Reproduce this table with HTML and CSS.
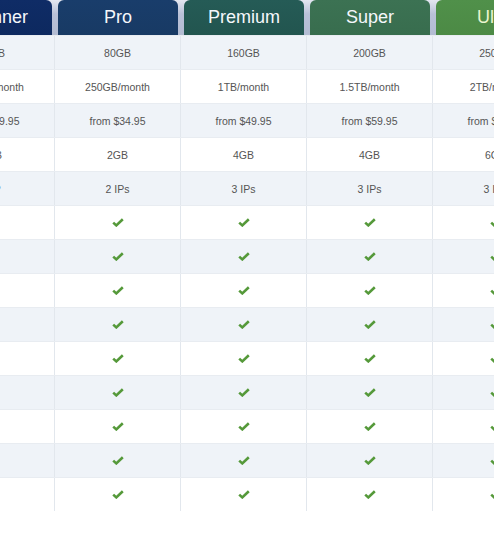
FILE: index.html
```html
<!DOCTYPE html>
<html>
<head>
<meta charset="utf-8">
<link rel="stylesheet" href="styles.css">
</head>
<body>
<div class="viewport">
  <div class="table">
    <div class="head">
      <div class="hcell beginner">Beginner</div>
      <div class="hcell pro">Pro</div>
      <div class="hcell premium">Premium</div>
      <div class="hcell super">Super</div>
      <div class="hcell ultra">Ultra</div>
    </div>
    <div class="row alt"><div class="cell">40GB</div><div class="cell">80GB</div><div class="cell">160GB</div><div class="cell">200GB</div><div class="cell">250GB</div></div>
    <div class="row"><div class="cell">100GB/month</div><div class="cell">250GB/month</div><div class="cell">1TB/month</div><div class="cell">1.5TB/month</div><div class="cell">2TB/month</div></div>
    <div class="row alt"><div class="cell">from $19.95</div><div class="cell">from $34.95</div><div class="cell">from $49.95</div><div class="cell">from $59.95</div><div class="cell">from $69.95</div></div>
    <div class="row"><div class="cell">1GB</div><div class="cell">2GB</div><div class="cell">4GB</div><div class="cell">4GB</div><div class="cell">6GB</div></div>
    <div class="row alt"><div class="cell">1 IP</div><div class="cell">2 IPs</div><div class="cell">3 IPs</div><div class="cell">3 IPs</div><div class="cell">3 IPs</div></div>
    <div class="row check-row"></div>
    <div class="row check-row alt"></div>
    <div class="row check-row"></div>
    <div class="row check-row alt"></div>
    <div class="row check-row"></div>
    <div class="row check-row alt"></div>
    <div class="row check-row"></div>
    <div class="row check-row alt"></div>
    <div class="row check-row"></div>
  </div>
</div>
<script>
  var svg = '<svg class="check" width="12" height="9" viewBox="0 0 12 9"><path d="M1.2 4.6 L4.3 7.4 L10.8 1.2" fill="none" stroke="#55993a" stroke-width="2.6" stroke-linejoin="miter"/></svg>';
  document.querySelectorAll('.check-row').forEach(function (r) {
    var h = '';
    for (var i = 0; i < 5; i++) h += '<div class="cell">' + svg + '</div>';
    r.innerHTML = h;
  });
</script>
</body>
</html>
```
FILE: styles.css
```css
html, body {
  margin: 0;
  padding: 0;
  background: #ffffff;
  overflow: hidden;
}
.viewport {
  width: 494px;
  height: 559px;
  overflow: hidden;
}
.table {
  width: 630px;
  margin-left: -72px;
  font-family: "Liberation Sans", Arial, sans-serif;
}
.head {
  display: grid;
  grid-template-columns: repeat(5, 126px);
  height: 35px;
  background: linear-gradient(#e4e7f1, #b9c1d8 40%, #b3bcd2);
}
.hcell {
  margin: 0 2px 0 4px;
  border-radius: 6px 6px 0 0;
  color: #f4f7fb;
  font-size: 18px;
  display: flex;
  align-items: center;
  justify-content: center;
}
.beginner { background: linear-gradient(#0f2c66, #0d295f); }
.pro { background: linear-gradient(#193d6b, #183a64); }
.premium { background: linear-gradient(#255b56, #22554f); }
.super { background: linear-gradient(#3c7253, #386d4e); }
.ultra { background: linear-gradient(#50904a, #4c8a45); color: #eaf6cf; }
.row {
  display: grid;
  grid-template-columns: repeat(5, 126px);
  height: 34px;
  box-sizing: border-box;
  border-top: 1px solid #e8ecf1;
  background: #ffffff;
}
.row.alt { background: #eff3f8; }
.cell {
  border-left: 1px solid #e2e7ed;
  display: flex;
  align-items: center;
  justify-content: center;
  font-size: 10.5px;
  color: #555555;
}
.check { display: block; }
```
